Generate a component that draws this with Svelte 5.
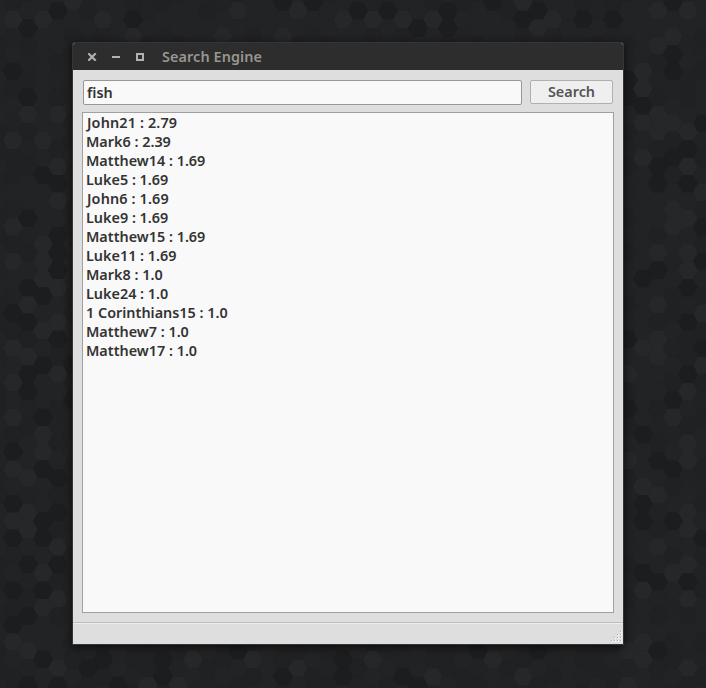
<script>
  const results = [
    'John21 : 2.79', 'Mark6 : 2.39', 'Matthew14 : 1.69', 'Luke5 : 1.69',
    'John6 : 1.69', 'Luke9 : 1.69', 'Matthew15 : 1.69', 'Luke11 : 1.69',
    'Mark8 : 1.0', 'Luke24 : 1.0', '1 Corinthians15 : 1.0', 'Matthew7 : 1.0',
    'Matthew17 : 1.0'
  ];
  let query = $state('fish');

  // Wallpaper: flat-topped hexagons, 15px between columns and 17.3px between rows.
  const PITCH = 17.3;
  const dark = '58,10 28,27 133,19 13,71 28,97 282,2 312,2 358,11 387,11 418,28 448,28 448,11 492,2 523,19 538,11 583,11 583,28 613,28 673,2 673,54 673,71 28,218 58,253 43,167 58,184 28,287 58,235 58,270 43,297 643,106 628,80 628,98 673,157 688,150 703,124 688,184 658,184 658,167 658,270 643,279 703,235 703,253 688,288 13,314 28,323 43,366 28,366 43,417 13,452 58,478 43,469 73,400 58,340 28,390 73,357 628,340 673,400 643,434 658,461 673,470 688,374 688,322 628,400 703,349 13,504 43,538 43,521 58,513 13,539 28,565 58,565 43,590 13,590 13,625 28,617 43,660 28,687 58,687 103,660 88,669 163,677 163,660 118,687 283,677 238,652 343,660 343,678 403,677 418,687 478,652 643,505 643,522 673,513 643,565 658,573 673,565 688,582 658,652 703,539 538,652';
  const light = '13,19 43,19 105,19 73,10 133,36 238,11 298,10 223,36 283,36 343,19 373,19 403,11 433,19 553,19 538,28 658,11 523,2 688,11 673,36 658,45 28,114 58,114 13,140 43,140 58,166 58,201 43,244 43,261 43,279 58,289 28,305 13,227 13,262 643,71 643,88 658,115 643,131 643,157 658,140 673,130 688,131 688,167 703,193 673,210 688,219 673,227 658,253 688,253 688,270 658,305 43,330 58,322 28,357 13,349 13,383 58,374 43,452 43,434 13,417 13,469 28,478 658,340 643,348 658,357 628,374 688,391 703,366 688,443 688,461 628,461 673,418 643,487 658,496 703,314 28,513 13,521 28,530 58,539 43,573 58,600 43,608 28,643 13,643 58,669 193,660 253,660 298,669 493,660 688,513 688,530 658,548 673,573 688,565 643,590 688,600 643,643 643,660 628,652 688,668 628,687 523,677 373,652 433,677 148,687 178,687';
  const offset = (c) => 2.1 + (Math.abs(c % 2) ? PITCH / 2 : 0);
  const tones = new Map();
  function mark(list, colour) {
    for (const pair of list.split(' ')) {
      const [x, y] = pair.split(',').map(Number);
      const c = Math.round((x - 13) / 15);
      tones.set(c + ':' + Math.round((y - offset(c)) / PITCH), colour);
    }
  }
  mark(dark, '#1c1d1f');
  mark(light, '#262729');
  const mids = ['#202123', '#222325', '#212224', '#222325', '#202123'];
  const cells = [];
  for (let c = -1; c < 48; c++) {
    for (let r = -1; r < 41; r++) {
      const x = 13 + 15 * c;
      const y = offset(c) + PITCH * r;
      const h = Math.abs((c * 73 + r * 151 + c * r * 37) % 5);
      cells.push({
        points: `${x - 10},${y} ${x - 5},${y - 8.65} ${x + 5},${y - 8.65} ${x + 10},${y} ${x + 5},${y + 8.65} ${x - 5},${y + 8.65}`,
        fill: tones.get(c + ':' + r) ?? mids[h]
      });
    }
  }
  const dots = [];
  for (let r = 0; r < 4; r++) for (let c = 3 - r; c < 4; c++) dots.push([c * 3, r * 3]);
</script>

<main class="desktop">
  <svg class="wallpaper" width="706" height="688" aria-hidden="true">
    {#each cells as cell}
      <polygon points={cell.points} fill={cell.fill} />
    {/each}
  </svg>

  <section class="window">
    <header class="titlebar">
      <svg class="controls" width="56" height="8" viewBox="0 0 56 8">
        <path d="M1 1L7 7M7 1L1 7" stroke="#b3b2ae" stroke-width="2.1" stroke-linecap="square" />
        <path d="M24 4H32" stroke="#b3b2ae" stroke-width="2" />
        <rect x="49" y="1" width="6" height="6" fill="none" stroke="#b3b2ae" stroke-width="2" />
      </svg>
      <span class="title">Search Engine</span>
    </header>
    <div class="body">
      <form class="search" onsubmit={(e) => e.preventDefault()}>
        <input class="entry" type="text" bind:value={query} spellcheck="false" />
        <button class="go" type="submit"><span>Search</span></button>
      </form>
      <ul class="list">
        {#each results as row}
          <li class:john={row.startsWith('J')}>{row}</li>
        {/each}
      </ul>
    </div>
    <footer class="status">
      <svg class="grip" width="11" height="11">
        {#each dots as [x, y]}
          <rect x={x} y={y} width="2" height="2" fill="#f2f2f2" />
          <rect x={x} y={y} width="1" height="1" fill="#a9a9a9" />
        {/each}
      </svg>
    </footer>
  </section>
</main>

<style>
  :global(body) { margin: 0; background: #202123; overflow: hidden; }
  .desktop {
    position: relative;
    width: 706px;
    height: 688px;
    overflow: hidden;
    font-family: "Noto Sans", "Open Sans", sans-serif;
    font-size: 14.4px;
    font-weight: 600;
    color: #333;
  }
  .wallpaper { display: block; }
  .window {
    position: absolute;
    left: 72px;
    top: 42px;
    width: 552px;
    height: 603px;
    box-sizing: border-box;
    display: flex;
    flex-direction: column;
    border: 1px solid #353535;
    border-radius: 3px 3px 0 0;
    background: #dedede;
    box-shadow: 0 2px 9px rgba(0, 0, 0, 0.65);
  }
  .titlebar {
    height: 27px;
    flex: none;
    display: flex;
    align-items: center;
    padding-left: 15px;
    background: #2d2d2d;
    border-radius: 2px 2px 0 0;
  }
  .controls { flex: none; margin-right: 18px; }
  .title { color: #98968f; line-height: 20px; padding-top: 1px; letter-spacing: 0.1px; }
  .body {
    flex: 1;
    min-height: 0;
    display: flex;
    flex-direction: column;
    gap: 7px;
    padding: 10px 9px 9px;
  }
  .search { display: flex; gap: 8px; height: 25px; margin: 0 1px; }
  .entry {
    flex: 1;
    min-width: 0;
    box-sizing: border-box;
    height: 25px;
    padding: 0 3px;
    border: 1px solid #979797;
    border-radius: 2px;
    outline: none;
    background: #f9f9f9;
    font: inherit;
    color: inherit;
  }
  .go {
    box-sizing: border-box;
    width: 83px;
    height: 24px;
    padding: 0;
    border: 1px solid #b0b0b0;
    border-radius: 2px;
    background: #efefef;
    font: inherit;
    line-height: 20px;
    color: #555;
  }
  .list {
    flex: 1;
    margin: 0;
    padding: 0 3px;
    list-style: none;
    border: 1px solid #a0a0a0;
    background: #f9f9f9;
  }
  .list li { height: 19px; line-height: 19px; white-space: pre; }
  .list li.john { padding-left: 1px; letter-spacing: 0.15px; }
  .status {
    height: 22px;
    flex: none;
    box-sizing: border-box;
    display: flex;
    justify-content: flex-end;
    align-items: flex-end;
    padding: 0 1px 2px;
    border-top: 1px solid #bdbdbd;
    box-shadow: inset 0 1px #eee;
  }
</style>
